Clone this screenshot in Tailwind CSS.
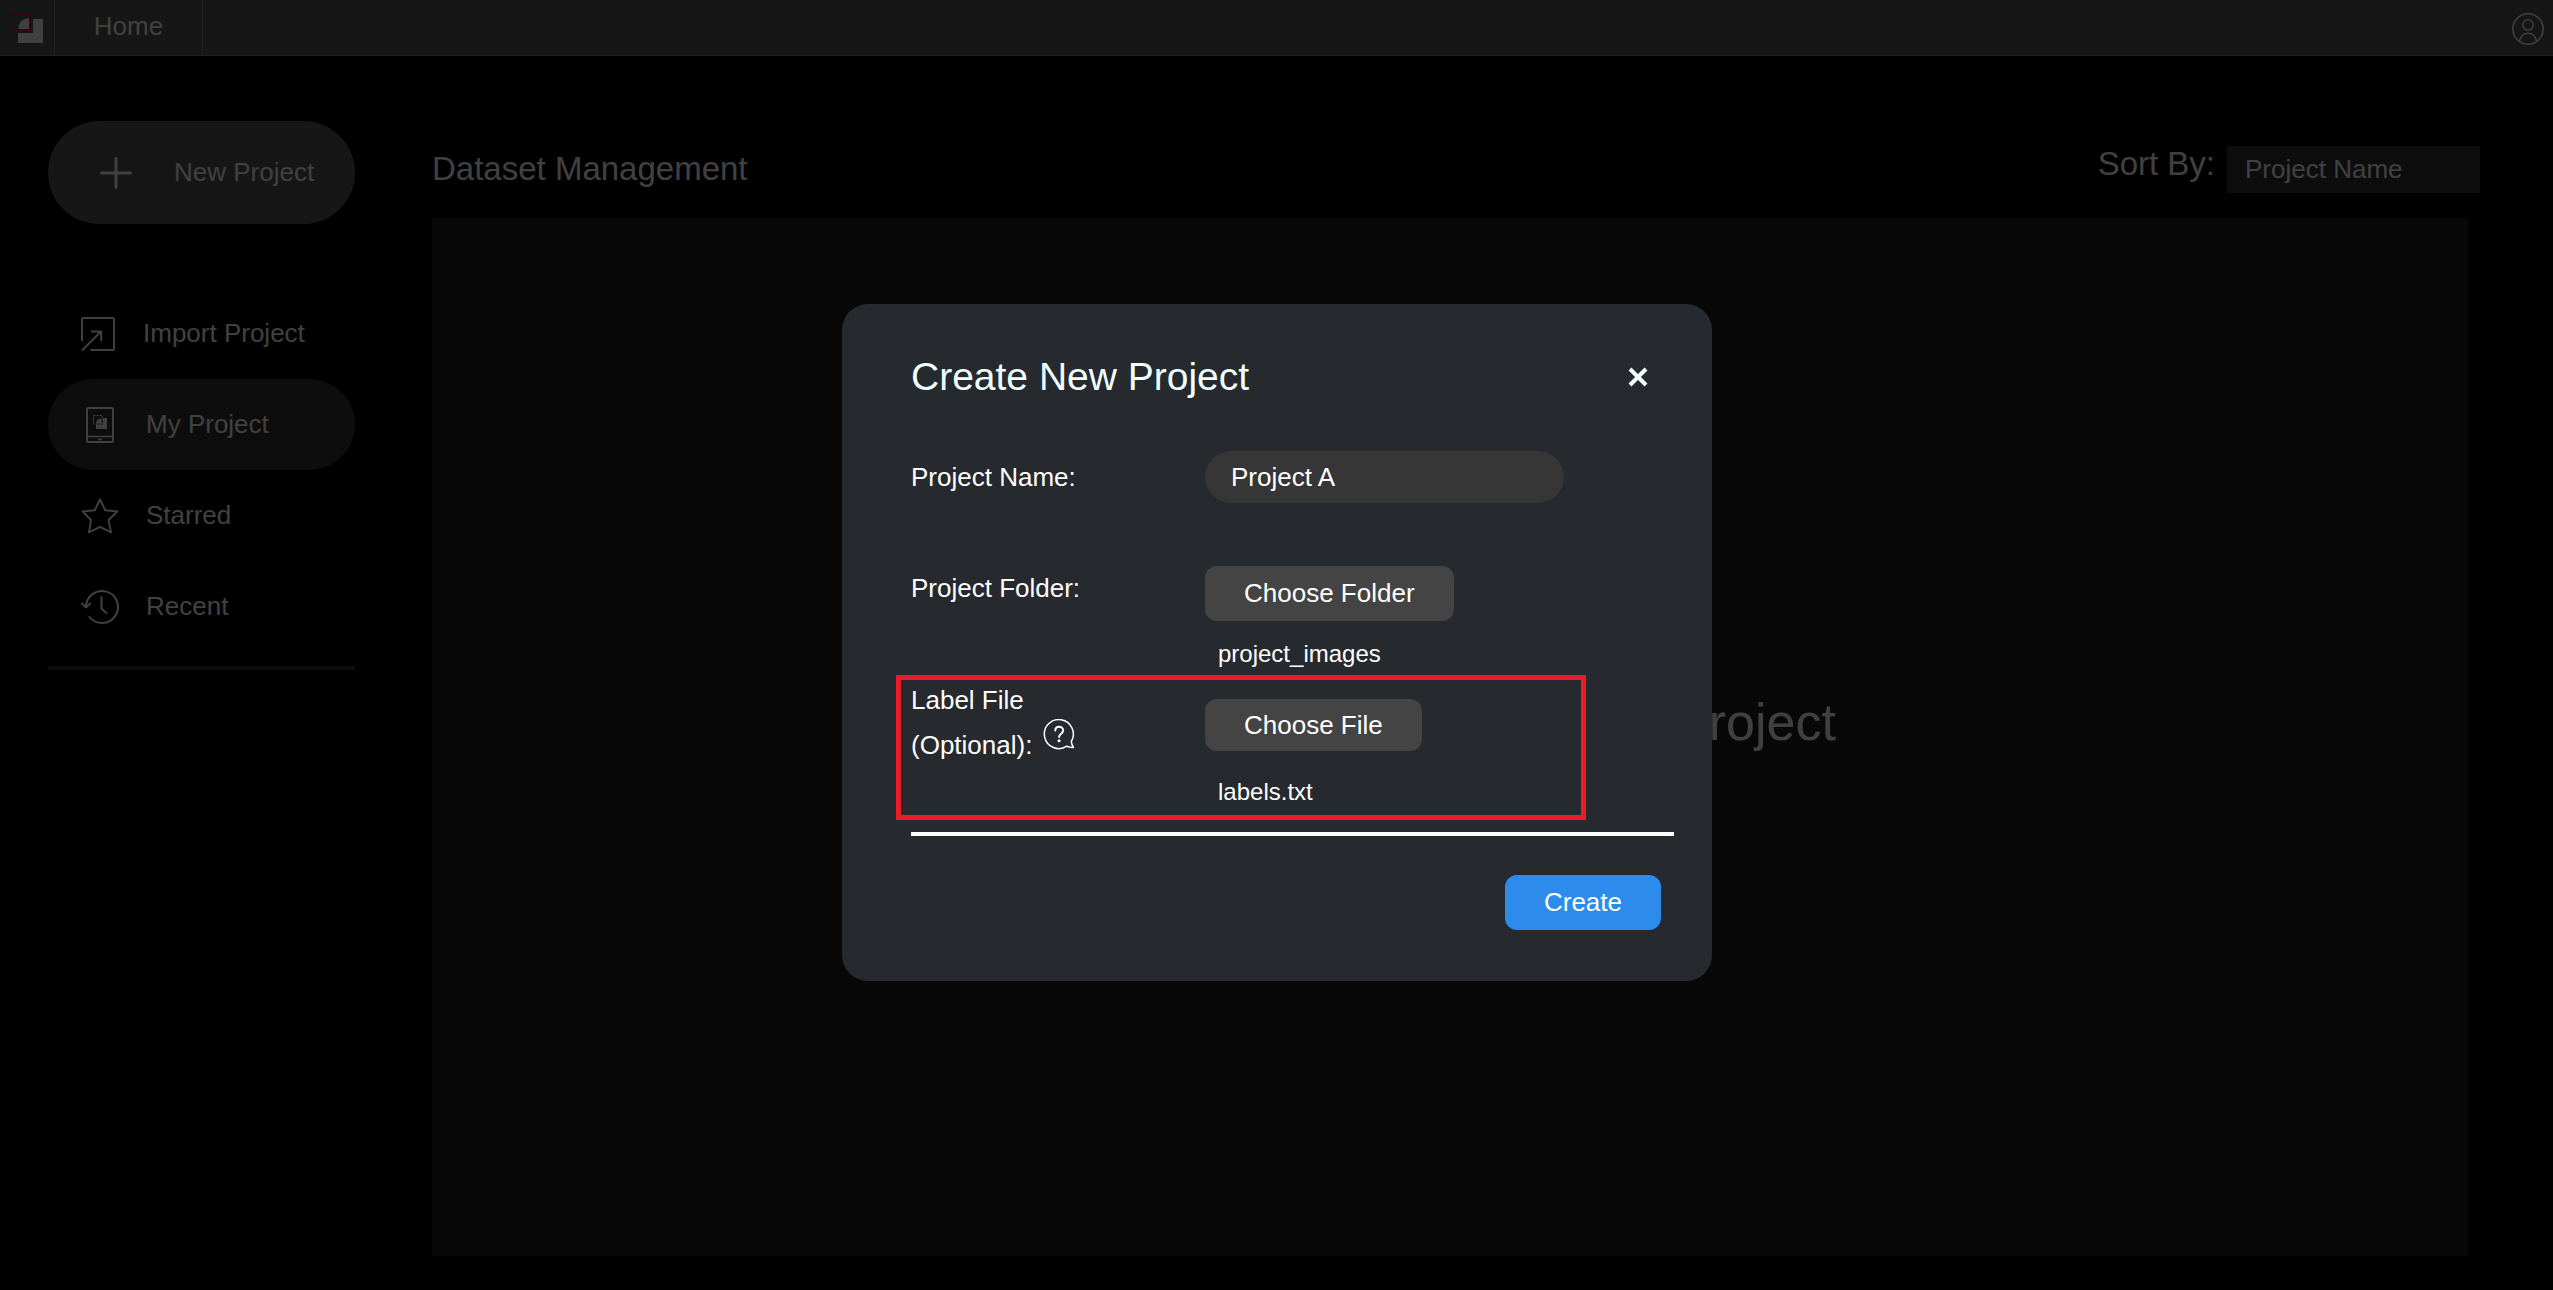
<!DOCTYPE html>
<html lang="en">
<head>
<meta charset="utf-8">
<title>Dataset Management</title>
<script src="https://cdn.jsdelivr.net/npm/@tailwindcss/browser@4"></script>
</head>
<body class="flex min-h-screen flex-col bg-black font-['Liberation_Sans',Arial,sans-serif] text-[26px] leading-[45px] text-white">

<header class="flex h-14 border-b border-[#808080] bg-[#585858]">
  <a href="#" aria-label="Start page" class="flex w-[55px] border-r border-[#808080] pt-3 pl-3">
    <svg class="h-8 w-8" viewBox="0 0 32 32" fill="none">
      <path d="M21 7h10v24H6V21h15z" fill="#fff"/>
      <path d="M6.500 17V16A9.500 9.500 0 0 1 16 6.500h1V17z" fill="#fff"/>
      <path d="M1.500 2.500h17v16h-17z" stroke="#d01040"/>
      <path d="M0 1h3v3H0zM17 1h3v3h-3zM0 17h3v3H0zM17 17h3v3h-3z" fill="#d01040"/>
    </svg>
  </a>
  <a href="#" class="flex w-[148px] justify-center border-r border-[#808080] leading-[52px]">Home</a>
  <button type="button" aria-label="Account" class="mr-[9px] ml-auto flex items-center pt-[3px]">
    <svg class="h-8 w-8" viewBox="0 0 32 32" fill="none" stroke="#fff" stroke-width="1.500">
      <circle cx="16" cy="16" r="15.200"/><circle cx="16" cy="12" r="5.300"/>
      <path d="M7.500 28.500C8 23.500 11.500 20.300 16 20.300s8 3.200 8.500 8.200"/>
    </svg>
  </button>
</header>

<div class="flex grow">
  <aside class="ml-12 w-[307px] shrink-0 pt-[65px]">
    <button type="button" class="flex h-[103px] w-full items-center gap-[42px] rounded-full bg-[#585858] pl-[52px]">
      <svg class="h-8 w-8" viewBox="0 0 32 32" fill="none" stroke="#fff" stroke-width="3" stroke-linecap="round"><path d="M16 1.500v29M1.500 16h29"/></svg>
      New Project
    </button>
    <nav class="mt-16">
      <a href="#" class="flex h-[91px] items-center gap-[27px] pl-[33px]">
        <svg class="h-[34px] w-[35px]" viewBox="0 0 35 34" fill="none" stroke="#fff" stroke-width="2">
          <path d="M1 24V2.500Q1 1 2.500 1h29Q33 1 33 2.500v29Q33 33 31.500 33H9.500M1 33.500L20 14.500M10 14.500h10.200V24"/>
        </svg>
        Import Project
      </a>
      <a href="#" class="flex h-[91px] items-center gap-[27px] rounded-full bg-[#343434] pl-[33px]">
        <svg class="h-[38px] w-[38px]" viewBox="0 0 38 38" fill="none" stroke="#fff" stroke-width="2">
          <rect x="6" y="2" width="26" height="34" rx="1.500"/>
          <path d="M6 30.500h26M17 33.500h4" stroke-width="1.500"/>
          <path d="M22 12h4v11H15v-4.500h7z" fill="#fff" stroke="none"/>
          <path d="M15 17.500q0-5 5.500-5v5z" fill="#fff" stroke="none"/>
          <path d="M12.500 9.500h8.500v8.500h-8.500z" stroke-width="1" stroke-dasharray="2 1"/>
        </svg>
        My Project
      </a>
      <a href="#" class="flex h-[91px] items-center gap-[27px] pl-[33px]">
        <svg class="h-[38px] w-[38px]" viewBox="0 0 38 38" fill="none" stroke="#fff" stroke-width="2" stroke-linejoin="round">
          <path d="M19 2.200l5.200 11 12.300 1.200-9 8.600 2.500 12.400L19 29.800 8 35.400 10 23 1.500 14.400l12.300-1.200z"/>
        </svg>
        Starred
      </a>
      <a href="#" class="flex h-[91px] items-center gap-[27px] pl-[33px]">
        <svg class="h-[38px] w-[38px]" viewBox="0 0 38 38" fill="none" stroke="#fff" stroke-width="2" stroke-linecap="round" stroke-linejoin="round">
          <path d="M5 19.500A16 16 0 1 1 8.500 29M1 15.500l4 4 4-4M20.500 9v11.500l5 4.500"/>
        </svg>
        Recent
      </a>
    </nav>
    <hr class="mt-[14px] border-t-4 border-[#363636]">
  </aside>

  <main class="mr-[73px] ml-[77px] flex grow flex-col pt-[90px] pb-[34px]">
    <div class="flex h-[72px] items-start justify-between">
      <h1 class="text-[33px]">Dataset Management</h1>
      <div class="flex gap-3">
        <label for="sort" class="text-[33px] leading-[36px]">Sort By:</label>
        <select id="sort" class="h-[47px] w-[253px] appearance-none bg-[#363636] pl-[18px]"><option>Project Name</option></select>
      </div>
    </div>
    <section class="mr-3 flex grow items-center justify-center bg-[#202020] pb-[30px]">
      <p class="text-[52px]">Please Import or Create a Project</p>
    </section>
  </main>
</div>

<div class="fixed inset-0 flex items-center justify-center bg-black/75 pb-[5px] pl-px">
  <form role="dialog" aria-labelledby="dialog-title" class="w-[870px] rounded-[26px] bg-[#26292e] pt-[50px] pr-[38px] pb-[51px] pl-[69px]">
    <div class="flex items-center justify-between">
      <h2 id="dialog-title" class="text-[39px] text-[#f0ffff]">Create New Project</h2>
      <button type="button" aria-label="Close" class="mr-6">
        <svg class="h-6 w-6" viewBox="0 0 24 24" fill="none" stroke="#f0ffff" stroke-width="4"><path d="M4 4l16 16M20 4l-16 16"/></svg>
      </button>
    </div>
    <div class="mt-[52px] grid grid-cols-[294px_1fr] items-center">
      <label for="name">Project Name:</label>
      <input id="name" type="text" value="Project A" class="h-[52px] w-[359px] rounded-full bg-[#363636] px-[26px]">
    </div>
    <div class="mt-[63px] grid grid-cols-[294px_1fr] items-start">
      <label for="folder">Project Folder:</label>
      <div>
        <button id="folder" type="button" class="block h-[55px] rounded-xl bg-[#444] px-[39px]">Choose Folder</button>
        <p class="mt-[15px] ml-[13px] text-2xl leading-[36px]">project_images</p>
      </div>
    </div>
    <div class="relative mt-[6px] grid grid-cols-[294px_1fr] items-start">
      <div>
        <label for="file">Label File</label>
        <div class="flex items-start gap-[11px]">
          <label for="file">(Optional):</label>
          <button type="button" aria-label="Help" class="-mt-1">
            <svg class="h-8 w-8" viewBox="0 0 32 32" fill="none" stroke="#fff" stroke-width="1.500" stroke-linecap="round" stroke-linejoin="round">
              <path d="M28.300 22.500A14.500 14.500 0 1 0 23.800 27.200Q27 28.500 30.500 28.500 28.500 25.500 28.300 22.500z"/>
              <path d="M12.300 11.500c0-5 7.800-5 7.800 0 0 3.500-4 3-4 6.500" stroke-width="2"/>
              <circle cx="16.100" cy="21.800" r=".8" fill="#fff"/>
            </svg>
          </button>
        </div>
      </div>
      <div class="pt-[21px]">
        <button id="file" type="button" class="block h-[52px] rounded-xl bg-[#444] px-[39px]">Choose File</button>
        <p class="mt-[23px] ml-[13px] text-2xl leading-[36px]">labels.txt</p>
      </div>
      <div class="pointer-events-none absolute -top-[3px] -bottom-[10px] -left-[15px] w-[690px] border-5 border-[#ed1c24]"></div>
    </div>
    <hr class="mt-[22px] border-t-4 border-white">
    <div class="mt-[39px] mr-[13px] flex justify-end">
      <button type="submit" class="h-[55px] rounded-xl bg-[#2d8ceb] px-[39px]">Create</button>
    </div>
  </form>
</div>
</body>
</html>
